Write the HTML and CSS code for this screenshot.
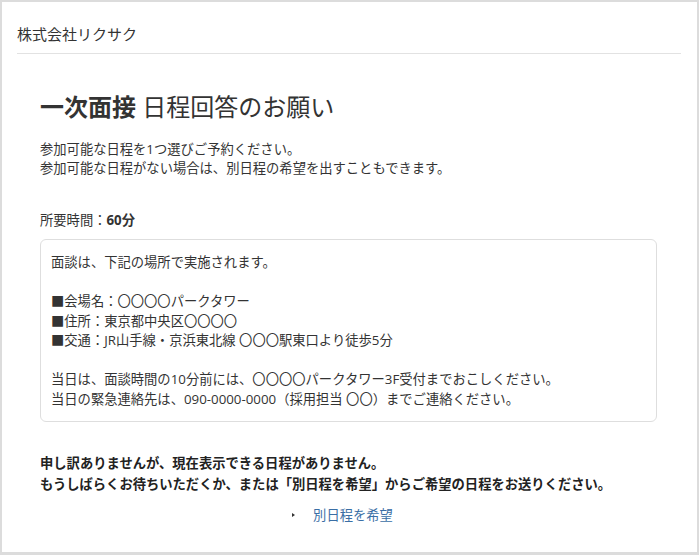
FILE: index.html
```html
<!DOCTYPE html>
<html lang="ja">
<head>
    <meta charset="UTF-8">
    <meta name="viewport" content="width=device-width, initial-scale=1.0">
    <title>日程回答のお願い - 株式会社リクサク</title>
    <link rel="stylesheet" href="styles.css">
</head>
<body>
    <div class="page">
        <div class="header">株式会社リクサク</div>
        <div class="main">
            <h1 class="title"><strong>一次面接</strong> 日程回答のお願い</h1>
            <p class="lead">
                参加可能な日程を1つ選びご予約ください。<br>
                参加可能な日程がない場合は、別日程の希望を出すこともできます。
            </p>
            <p class="duration">所要時間：<strong>60分</strong></p>
            <div class="info-box">
                面談は、下記の場所で実施されます。<br>
                <br>
                ■会場名：〇〇〇〇パークタワー<br>
                ■住所：東京都中央区〇〇〇〇<br>
                ■交通：JR山手線・京浜東北線 〇〇〇駅東口より徒歩5分<br>
                <br>
                当日は、面談時間の10分前には、〇〇〇〇パークタワー3F受付までおこしください。<br>
                当日の緊急連絡先は、090-0000-0000（採用担当 〇〇）までご連絡ください。
            </div>
            <p class="notice">
                申し訳ありませんが、現在表示できる日程がありません。<br>
                もうしばらくお待ちいただくか、または「別日程を希望」からご希望の日程をお送りください。
            </p>
            <div class="link-row">
                <span class="arrow"></span>
                <a href="#" class="other-link">別日程を希望</a>
            </div>
        </div>
    </div>
</body>
</html>
```

FILE: styles.css
```css
html, body {
    margin: 0;
    padding: 0;
    background-color: #fff;
}
body {
    font-family: "Open Sans", "Noto Sans CJK JP", sans-serif;
    color: #333;
}
.page {
    height: 555px;
    box-sizing: border-box;
    border: 2px solid #dcdcdc;
    border-bottom-width: 3px;
    background-color: #fff;
}
.header {
    margin: 0 16px 0 15px;
    padding: 22px 0 8px;
    font-size: 15px;
    line-height: 21px;
    color: #333;
    border-bottom: 1px solid #e2e2e2;
}
.main {
    padding: 0 40px 0 38px;
}
.title {
    margin: 37px 0 0;
    font-size: 24px;
    line-height: 32px;
    font-weight: normal;
    color: #333;
}
.title strong {
    font-weight: bold;
}
.lead {
    margin: 17px 0 0;
    font-size: 13.3px;
    line-height: 19px;
}
.duration {
    margin: 33px 0 0;
    font-size: 13.3px;
    line-height: 19px;
}
.info-box {
    margin-top: 9px;
    padding: 13px 10px 12px;
    border: 1px solid #dedede;
    border-radius: 6px;
    font-size: 13.3px;
    line-height: 19.5px;
}
.notice {
    margin: 31px 0 0;
    font-size: 13.3px;
    line-height: 21px;
    font-weight: bold;
    color: #222;
}
.link-row {
    margin-top: 10px;
    display: flex;
    justify-content: center;
    align-items: center;
    gap: 18px;
    font-size: 13.3px;
    line-height: 20px;
    padding-right: 12px;
}
.arrow {
    width: 0;
    height: 0;
    border-top: 2px solid transparent;
    border-bottom: 2px solid transparent;
    border-left: 3px solid #333;
}
.other-link {
    color: #3a6ea5;
    text-decoration: none;
}
```
